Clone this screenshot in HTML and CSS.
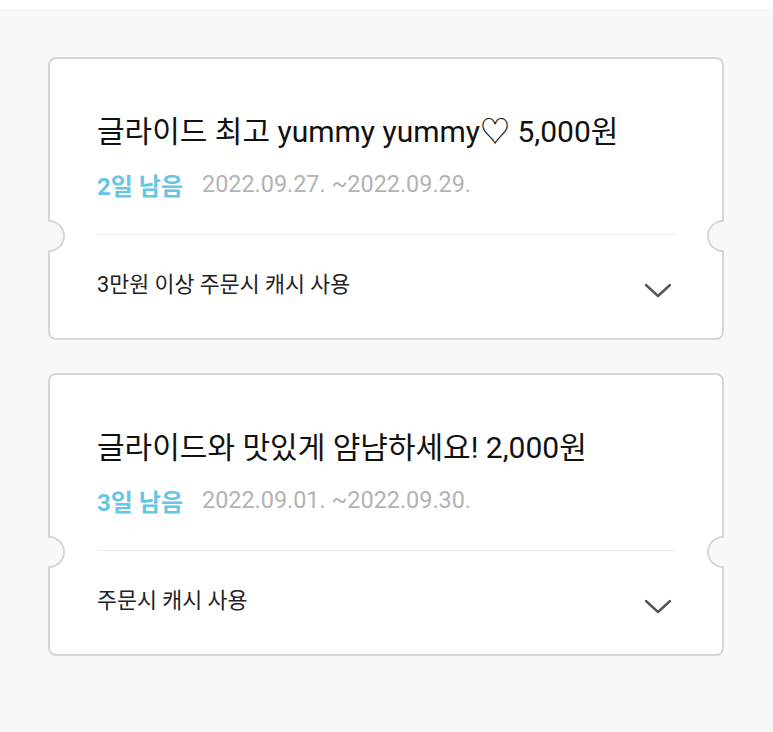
FILE: index.html
```html
<!DOCTYPE html>
<html lang="ko">
  <head>
    <meta charset="UTF-8" />
    <title>쿠폰</title>
    <meta name="viewport" content="width=device-width, initial-scale=1.0" />
    <link rel="stylesheet" href="styles.css">
  </head>
  <body>
    <div class="top-edge"></div>
    <div class="coupon-list">
      <div class="coupon">
        <span class="notch notch-left"></span>
        <span class="notch notch-right"></span>
        <div class="coupon-main">
          <h2 class="coupon-title">글라이드 최고 yummy yummy♡ 5,000원</h2>
          <div class="coupon-meta">
            <span class="days-left">2일 남음</span>
            <span class="period">2022.09.27. ~2022.09.29.</span>
          </div>
        </div>
        <div class="coupon-foot">
          <span class="condition">3만원 이상 주문시 캐시 사용</span>
          <svg class="chevron" width="28" height="16" viewBox="0 0 28 16">
            <path d="M2 2 L14 13 L26 2" fill="none" stroke="#555" stroke-width="2.4" stroke-linecap="round" stroke-linejoin="round" />
          </svg>
        </div>
      </div>

      <div class="coupon">
        <span class="notch notch-left"></span>
        <span class="notch notch-right"></span>
        <div class="coupon-main">
          <h2 class="coupon-title">글라이드와 맛있게 얌냠하세요! 2,000원</h2>
          <div class="coupon-meta">
            <span class="days-left">3일 남음</span>
            <span class="period">2022.09.01. ~2022.09.30.</span>
          </div>
        </div>
        <div class="coupon-foot">
          <span class="condition">주문시 캐시 사용</span>
          <svg class="chevron" width="28" height="16" viewBox="0 0 28 16">
            <path d="M2 2 L14 13 L26 2" fill="none" stroke="#555" stroke-width="2.4" stroke-linecap="round" stroke-linejoin="round" />
          </svg>
        </div>
      </div>
    </div>
  </body>
</html>
```

FILE: styles.css
```css
* {
  box-sizing: border-box;
  font-family: Roboto, "Noto Sans CJK KR", sans-serif;
}

body {
  margin: 0;
  background-color: #f8f8f8;
  min-height: 100vh;
}

.top-edge {
  height: 9px;
  background-color: #fff;
}

.coupon-list {
  display: flex;
  flex-direction: column;
  gap: 33px;
  padding: 48px 49px 0 48px;
}

.coupon {
  position: relative;
  background-color: #fff;
  border: 2px solid #d6d6d6;
  border-radius: 8px;
  height: 283px;
}

.notch {
  position: absolute;
  top: 161px;
  width: 17px;
  height: 32px;
  background-color: #f8f8f8;
  border: 2px solid #d6d6d6;
}

.notch-left {
  left: -2px;
  border-left: none;
  border-radius: 0 16px 16px 0;
}

.notch-right {
  right: -2px;
  border-right: none;
  border-radius: 16px 0 0 16px;
}

.coupon-main {
  margin: 0 46px 0 47px;
  padding: 53px 0 36px;
  border-bottom: 1px solid #ececec;
}

.coupon-title {
  margin: 0;
  font-size: 30px;
  font-weight: 400;
  line-height: 40px;
  color: #111;
}

.coupon-meta {
  display: flex;
  align-items: center;
  gap: 19px;
  margin-top: 18px;
  height: 28px;
}

.days-left {
  font-size: 24px;
  font-weight: 700;
  color: #64c7e5;
}

.period {
  font-size: 23.4px;
  color: #b3b3b3;
}

.coupon-foot {
  display: flex;
  align-items: center;
  justify-content: space-between;
  margin: 0 46px 0 47px;
  padding-top: 36px;
}

.condition {
  font-size: 21.7px;
  line-height: 28px;
  color: #222;
}

.chevron {
  margin-right: 4px;
  margin-top: 12px;
}
```
